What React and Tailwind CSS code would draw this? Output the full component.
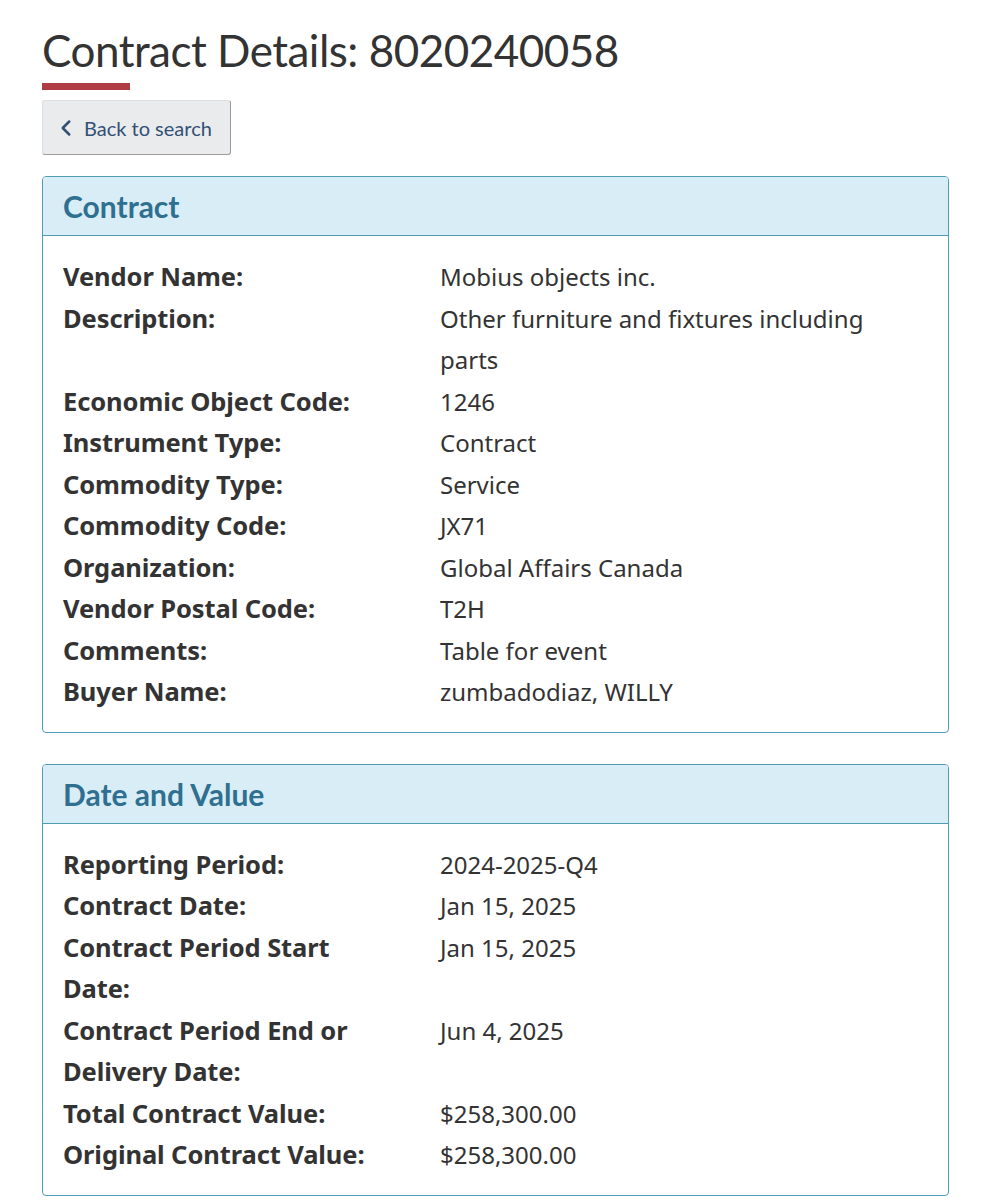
import { ChevronLeft } from 'lucide-react';

const contractRows = [
  ['Vendor Name:', 'Mobius objects inc.'],
  ['Description:', 'Other furniture and fixtures including parts'],
  ['Economic Object Code:', '1246'],
  ['Instrument Type:', 'Contract'],
  ['Commodity Type:', 'Service'],
  ['Commodity Code:', 'JX71'],
  ['Organization:', 'Global Affairs Canada'],
  ['Vendor Postal Code:', 'T2H'],
  ['Comments:', 'Table for event'],
  ['Buyer Name:', 'zumbadodiaz, WILLY'],
];

const dateRows = [
  ['Reporting Period:', '2024-2025-Q4'],
  ['Contract Date:', 'Jan 15, 2025'],
  ['Contract Period Start Date:', 'Jan 15, 2025'],
  ['Contract Period End or Delivery Date:', 'Jun 4, 2025'],
  ['Total Contract Value:', '$258,300.00'],
  ['Original Contract Value:', '$258,300.00'],
];

function Panel({ title, rows }) {
  return (
    <section className="rounded-[4px] border border-[#4f9db5] overflow-hidden">
      <div className="h-[59px] bg-[#d9edf7] border-b border-[#4f9db5] flex items-center px-[20px]">
        <h2 className="font-['Lato',sans-serif] font-bold text-[30px] text-[#2f6f8f] leading-none">
          {title}
        </h2>
      </div>
      <dl className="px-[20px] pt-[20px] pb-[19px] font-['Noto_Sans',sans-serif] leading-[41.5px] text-[#333]">
        {rows.map(([label, value]) => (
          <div key={label} className="grid grid-cols-[377px_1fr]">
            <dt className="font-bold text-[25.5px] tracking-[-0.1px] pr-[50px]">{label}</dt>
            <dd className="text-[24px] pr-[30px]">{value}</dd>
          </div>
        ))}
      </dl>
    </section>
  );
}

export default function App() {
  return (
    <div className="min-h-[1200px] bg-white px-[42px] pt-[20px]">
      <h1 className="font-['Lato',sans-serif] text-[44px] leading-[60px] text-[#333] tracking-[-0.5px]">
        Contract Details: 8020240058
      </h1>
      <div className="mt-[3px] h-[7px] w-[88px] bg-[#af3c43]" />
      <button className="mt-[10px] h-[55px] w-[189px] flex items-center gap-[5px] pl-[10px] rounded-[3px] bg-[#eaebed] border border-[#dcdee1] border-b-[#9a9a9a] border-r-[#9a9a9a] font-['Lato',sans-serif] text-[20px] text-[#335075]">
        <ChevronLeft size={26} strokeWidth={2.3} />
        Back to search
      </button>
      <div className="mt-[21px] flex flex-col gap-[31px]">
        <Panel title="Contract" rows={contractRows} />
        <Panel title="Date and Value" rows={dateRows} />
      </div>
    </div>
  );
}
